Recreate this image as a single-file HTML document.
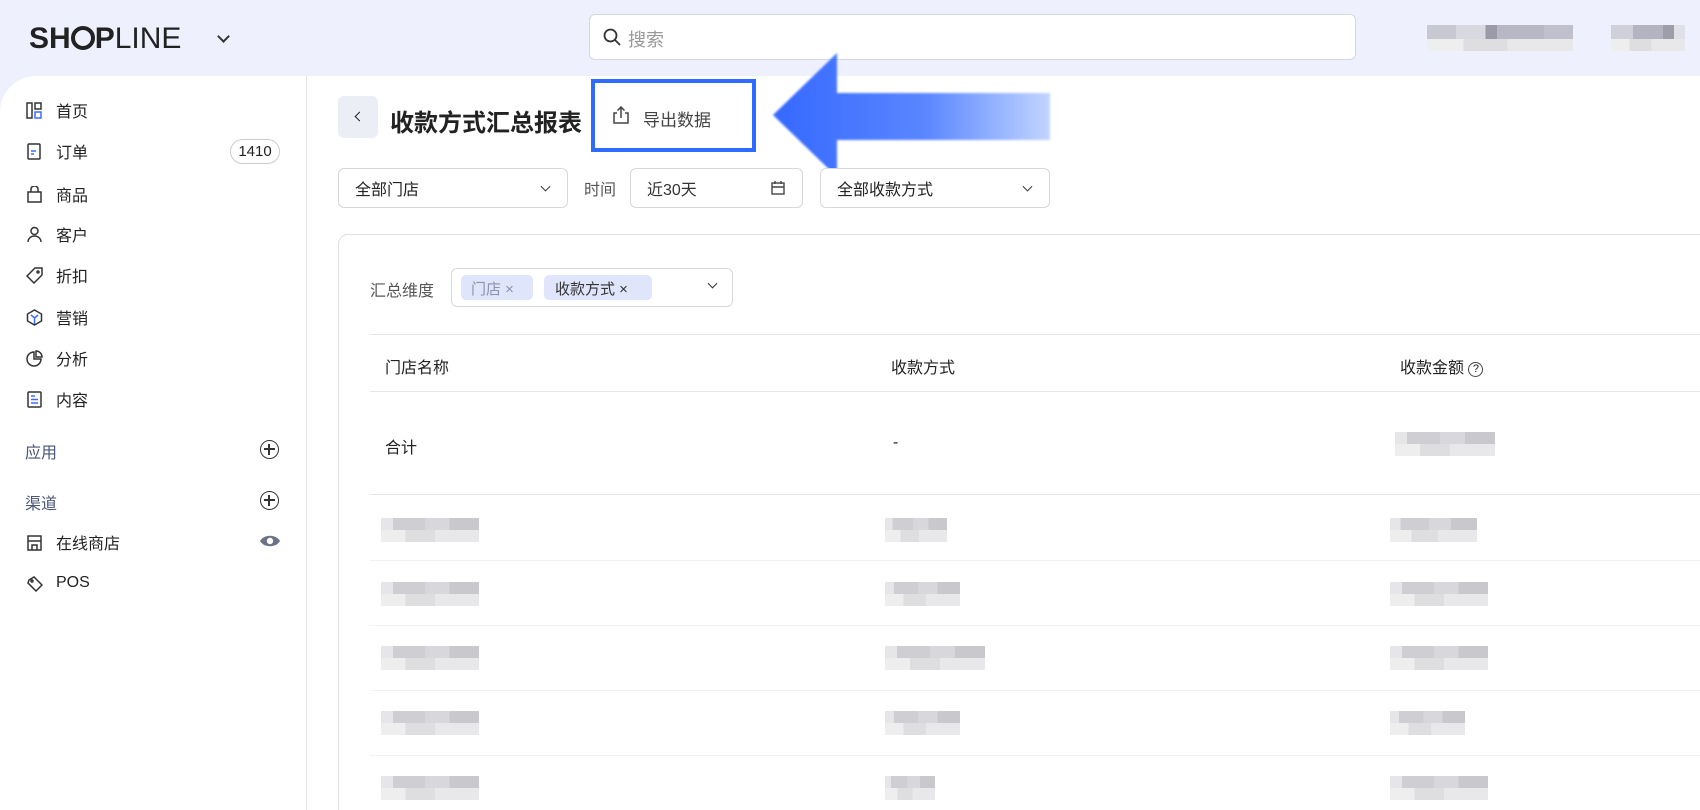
<!DOCTYPE html>
<html style="width:1700px;height:810px;overflow:hidden"><head><meta charset="utf-8"><style>
*{box-sizing:border-box;margin:0;padding:0}
body{width:1700px;height:810px;overflow:hidden;background:#eef1fd;font-family:"Liberation Sans","Noto Sans CJK SC",sans-serif;color:#222;position:relative}
.abs{position:absolute}
.side{left:0;top:76px;width:307px;height:734px;background:#fff;border-top-left-radius:36px;border-right:1px solid #e4e4e4}
.main{left:307px;top:76px;width:1393px;height:734px;background:#fff}
.nav{position:absolute;left:26px;font-size:16px;display:flex;align-items:center;height:24px}
.nav svg{width:17px;height:17px;margin-right:13px}
.sec{position:absolute;left:25px;font-size:16px;color:#4a5578}
.plus{position:absolute;left:260px;width:19px;height:19px;border:1.6px solid #333;border-radius:50%}
.plus:before{content:"";position:absolute;left:3px;right:3px;top:7.3px;height:1.6px;background:#333}
.plus:after{content:"";position:absolute;top:3px;bottom:3px;left:7.3px;width:1.6px;background:#333}
.box{position:absolute;border:1px solid #d8d8dc;border-radius:6px;background:#fff;font-size:16px;display:flex;align-items:center;padding-left:16px}
.chev{position:absolute;right:18px;top:50%;width:7px;height:7px;border-right:1.5px solid #333;border-bottom:1.5px solid #333;transform:translateY(-70%) rotate(45deg)}
.line{position:absolute;left:370px;right:0;height:1px;background:#e6e6e6}
.th{position:absolute;font-size:16px;color:#222}
.blur{position:absolute;height:24px;background:linear-gradient(90deg,#e6e6e8 0 12%,#cfcfd3 12% 45%,#d8d8dc 45% 70%,#c9c9cd 70% 100%)}
.blur:after{content:"";position:absolute;left:0;right:0;bottom:0;height:12px;background:linear-gradient(90deg,#eeeeef 0 25%,#dedee0 25% 55%,#e8e8ea 55% 100%)}
</style></head><body>
<div class="abs" style="left:29px;top:22px;font-size:30px;font-weight:bold;color:#222">SH<span style="display:inline-block;width:24px;height:24px;border:4px solid #222;border-radius:50%;vertical-align:-2px"></span>P<span style="font-weight:normal">LINE</span></div>
<div class="abs" style="left:219px;top:32px;width:9px;height:9px;border-right:2px solid #333;border-bottom:2px solid #333;transform:rotate(45deg)"></div>
<div class="abs" style="left:589px;top:14px;width:767px;height:46px;background:#fff;border:1px solid #d6d8e0;border-radius:6px"></div>
<svg class="abs" style="left:603px;top:28px" width="18" height="18" viewBox="0 0 18 18"><circle cx="7.5" cy="7.5" r="6" fill="none" stroke="#333" stroke-width="1.8"/><path d="M12 12l5 5" stroke="#333" stroke-width="1.8"/></svg>
<div class="abs" style="left:628px;top:26px;font-size:18px;color:#999">搜索</div>
<div class="abs blur" style="left:1427px;top:25px;width:146px;height:26px;background:linear-gradient(90deg,#c8c8d2 0 20%,#d8d8e0 20% 40%,#9a9aa8 40% 48%,#b8b8c4 48% 80%,#c0c0cc 80%)"></div>
<div class="abs blur" style="left:1611px;top:25px;width:74px;height:26px;background:linear-gradient(90deg,#d0d0da 0 30%,#b4b4c0 30% 70%,#9e9eaa 70% 85%,#e0e0e8 85%)"></div>

<div class="abs side"></div>
<div class="abs main"></div>

<div class="nav" style="top:98px"><svg viewBox="0 0 17 17" fill="none" stroke="#333" stroke-width="1.5"><rect x="1" y="1" width="5" height="15"/><rect x="9" y="1" width="6" height="6"/><rect x="9" y="10" width="6" height="6" stroke="#3a6dff"/></svg>首页</div>
<div class="nav" style="top:139px"><svg viewBox="0 0 17 17" fill="none" stroke="#333" stroke-width="1.5"><rect x="2" y="1" width="12" height="15" rx="1"/><path d="M5 8h5M5 11h3" stroke="#3a6dff"/></svg>订单</div>
<div class="abs" style="left:230px;top:139px;width:50px;height:25px;border:1px solid #ccc;border-radius:13px;font-size:15px;text-align:center;line-height:23px">1410</div>
<div class="nav" style="top:182px"><svg viewBox="0 0 17 17" fill="none" stroke="#333" stroke-width="1.5"><path d="M2 6h13v10H2zM5 6V3a3.5 3 0 017 0v3"/></svg>商品</div>
<div class="nav" style="top:222px"><svg viewBox="0 0 17 17" fill="none" stroke="#333" stroke-width="1.5"><circle cx="8.5" cy="5" r="3.5"/><path d="M2 16a6.5 6 0 0113 0"/></svg>客户</div>
<div class="nav" style="top:263px"><svg viewBox="0 0 17 17" fill="none" stroke="#333" stroke-width="1.5"><path d="M9 1h7v7l-8 8-7-7z"/><circle cx="12" cy="5" r="1"/></svg>折扣</div>
<div class="nav" style="top:305px"><svg viewBox="0 0 17 17" fill="none" stroke="#333" stroke-width="1.5"><path d="M8.5 1l7 4v7l-7 4-7-4V5z"/><path d="M5 6l3.5 3 3.5-3M8.5 9v6" stroke="#3a6dff"/></svg>营销</div>
<div class="nav" style="top:346px"><svg viewBox="0 0 17 17" fill="none" stroke="#333" stroke-width="1.5"><path d="M8 2a7 7 0 107 7H8z"/><path d="M10 1a6 6 0 016 6h-6z"/></svg>分析</div>
<div class="nav" style="top:387px"><svg viewBox="0 0 17 17" fill="none" stroke="#333" stroke-width="1.5"><rect x="2" y="1" width="13" height="15" rx="1"/><path d="M5 5h4M5 8.5h7M5 12h7" stroke="#3a6dff"/></svg>内容</div>
<div class="sec" style="top:439px">应用</div><div class="plus" style="top:440px"></div>
<div class="sec" style="top:490px">渠道</div><div class="plus" style="top:491px"></div>
<div class="nav" style="top:530px"><svg viewBox="0 0 17 17" fill="none" stroke="#333" stroke-width="1.5"><path d="M2 2h13v14H2zM2 7h13M6 16v-5h5v5"/></svg>在线商店</div>
<svg class="abs" style="left:259px;top:533px" width="22" height="16" viewBox="0 0 22 16"><path d="M1 8C5 1 17 1 21 8 17 15 5 15 1 8z" fill="#6b7385"/><circle cx="11" cy="8" r="3.2" fill="#fff"/></svg>
<div class="nav" style="top:571px"><svg viewBox="0 0 17 17" fill="none" stroke="#333" stroke-width="1.5"><path d="M3 5l5-3 8 8-6 6-8-8z"/><circle cx="6" cy="6" r="1"/></svg>POS</div>

<div class="abs" style="left:338px;top:96px;width:40px;height:42px;background:#eceef5;border-radius:6px"></div>
<div class="abs" style="left:356px;top:113px;width:7px;height:7px;border-left:1.8px solid #222;border-bottom:1.8px solid #222;transform:rotate(45deg)"></div>
<div class="abs" style="left:390px;top:103px;font-size:24px;font-weight:bold;color:#222">收款方式汇总报表</div>
<div class="abs" style="left:591px;top:79px;width:165px;height:73px;border:4px solid #2f6bff;background:#fff"></div>
<svg class="abs" style="left:612px;top:106px" width="18" height="18" viewBox="0 0 18 18" fill="none" stroke="#444" stroke-width="1.5"><path d="M5 7H2v10h14V7h-3M9 12V1M5.5 4.5L9 1l3.5 3.5"/></svg>
<div class="abs" style="left:643px;top:106px;font-size:17px;color:#444">导出数据</div>
<svg class="abs" style="left:770px;top:50px" width="290" height="135" viewBox="770 50 290 135"><defs><linearGradient id="g" x1="0" x2="1"><stop offset="0" stop-color="#3568ff"/><stop offset="0.55" stop-color="#5a86ff"/><stop offset="1" stop-color="#c2d5ff"/></linearGradient><filter id="f"><feGaussianBlur stdDeviation="1"/></filter></defs><path d="M773 115L837 53V93H1050V140H837V177Z" fill="url(#g)" filter="url(#f)"/></svg>

<div class="box" style="left:338px;top:168px;width:230px;height:40px">全部门店<span class="chev"></span></div>
<div class="abs" style="left:584px;top:176px;font-size:16px;color:#555">时间</div>
<div class="box" style="left:630px;top:168px;width:173px;height:40px;color:#333">近30天
<svg style="position:absolute;right:16px;top:11px" width="16" height="16" viewBox="0 0 16 16" fill="none" stroke="#444" stroke-width="1.4"><rect x="2" y="3" width="12" height="11"/><path d="M2 7h12M5 1v3M11 1v3"/></svg></div>
<div class="box" style="left:820px;top:168px;width:230px;height:40px">全部收款方式<span class="chev"></span></div>

<div class="abs" style="left:338px;top:234px;width:1400px;height:590px;border:1px solid #e0e0e0;border-radius:10px"></div>
<div class="abs" style="left:370px;top:277px;font-size:16px;color:#555">汇总维度</div>
<div class="abs" style="left:451px;top:268px;width:282px;height:39px;border:1px solid #d8d8dc;border-radius:6px"></div>
<div class="abs" style="left:461px;top:275px;width:72px;height:25px;background:#dfe5fb;border-radius:5px;font-size:15px;color:#8a93b0;padding:3px 0 0 10px">门店 ×</div>
<div class="abs" style="left:544px;top:275px;width:108px;height:25px;background:#dfe5fb;border-radius:5px;font-size:15px;color:#333;padding:3px 0 0 11px">收款方式 ×</div>
<div class="abs" style="left:709px;top:280px;width:7px;height:7px;border-right:1.5px solid #333;border-bottom:1.5px solid #333;transform:rotate(45deg)"></div>

<div class="line" style="top:334px"></div>
<div class="th" style="left:385px;top:354px">门店名称</div>
<div class="th" style="left:891px;top:354px">收款方式</div>
<div class="th" style="left:1400px;top:354px">收款金额 <span style="display:inline-block;width:15px;height:15px;border:1.3px solid #444;border-radius:50%;font-size:11px;text-align:center;line-height:13px;vertical-align:1px">?</span></div>
<div class="line" style="top:391px"></div>
<div class="th" style="left:385px;top:434px">合计</div>
<div class="th" style="left:893px;top:434px">-</div>
<div class="blur" style="left:1395px;top:432px;width:100px"></div>
<div class="line" style="top:494px"></div>

<div class="blur" style="left:381px;top:518px;width:98px"></div><div class="blur" style="left:885px;top:518px;width:62px"></div><div class="blur" style="left:1390px;top:518px;width:87px"></div>
<div class="line" style="top:560px;background:#f2f2f2"></div>
<div class="blur" style="left:381px;top:582px;width:98px"></div><div class="blur" style="left:885px;top:582px;width:75px"></div><div class="blur" style="left:1390px;top:582px;width:98px"></div>
<div class="line" style="top:625px;background:#f2f2f2"></div>
<div class="blur" style="left:381px;top:646px;width:98px"></div><div class="blur" style="left:885px;top:646px;width:100px"></div><div class="blur" style="left:1390px;top:646px;width:98px"></div>
<div class="line" style="top:690px;background:#f2f2f2"></div>
<div class="blur" style="left:381px;top:711px;width:98px"></div><div class="blur" style="left:885px;top:711px;width:75px"></div><div class="blur" style="left:1390px;top:711px;width:75px"></div>
<div class="line" style="top:755px;background:#f2f2f2"></div>
<div class="blur" style="left:381px;top:776px;width:98px"></div><div class="blur" style="left:885px;top:776px;width:50px"></div><div class="blur" style="left:1390px;top:776px;width:98px"></div>
</body></html>
